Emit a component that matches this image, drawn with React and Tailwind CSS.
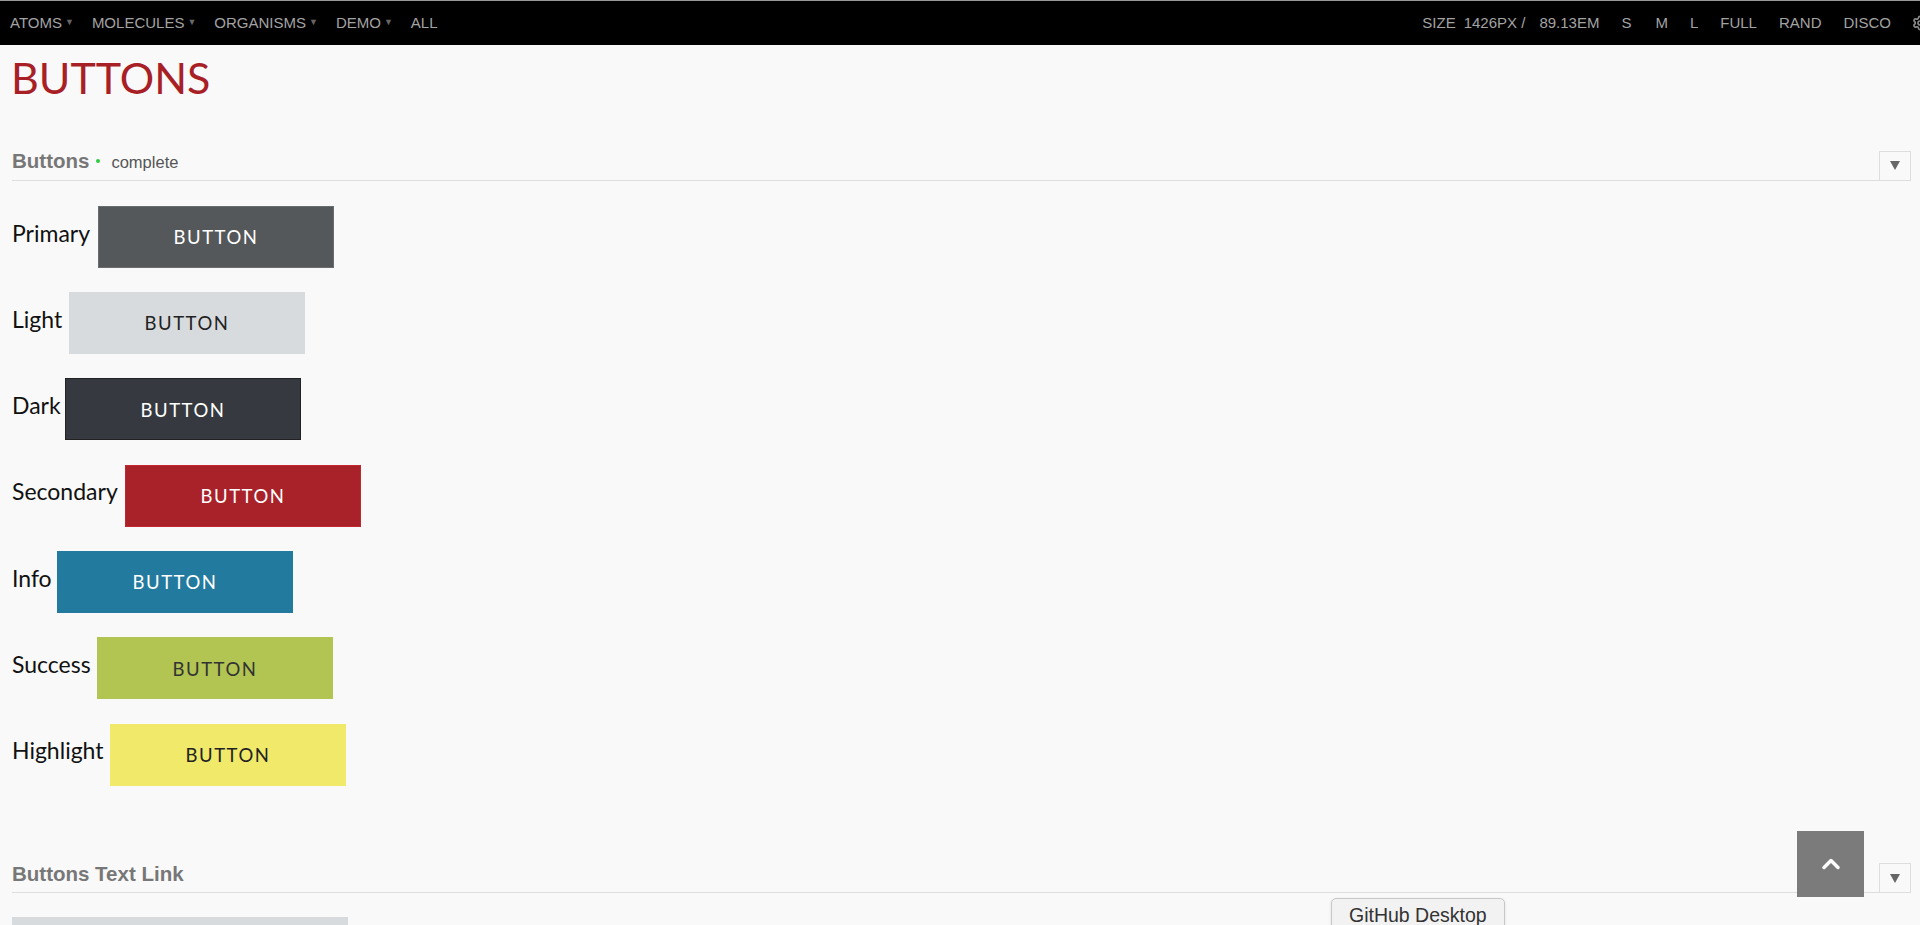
import React from 'react';
import { Settings, ChevronUp } from 'lucide-react';

const navLeft = ['ATOMS', 'MOLECULES', 'ORGANISMS', 'DEMO'];

const variants = [
  { label: 'Primary', labelW: 'w-[86px]', btn: 'bg-[#55585b] border-[#6a6d70] text-white' },
  { label: 'Light', labelW: 'w-[57px]', btn: 'bg-[#d8dbde] border-[#d8dbde] text-[#222]' },
  { label: 'Dark', labelW: 'w-[53px]', btn: 'bg-[#363a40] border-[#222] text-white' },
  { label: 'Secondary', labelW: 'w-[113px]', btn: 'bg-[#a92129] border-[#c0272f] text-white' },
  { label: 'Info', labelW: 'w-[45px]', btn: 'bg-[#227a9f] border-[#227a9f] text-white' },
  { label: 'Success', labelW: 'w-[85px]', btn: 'bg-[#b2c452] border-[#b2c452] text-[#333]' },
  { label: 'Highlight', labelW: 'w-[98px]', btn: 'bg-[#f0e96a] border-[#f0e96a] text-[#222]' },
];

const sans = "font-['Source_Sans_Pro','Lato','Noto_Sans',sans-serif]";
const helv = "font-['Liberation_Sans',Arial,sans-serif]";

const Toggle = () => (
  <div className="w-[32px] h-[30px] border border-[#ddd] bg-[#f9f9f9] flex items-center justify-center shrink-0">
    <span className="w-0 h-0 border-l-[5px] border-r-[5px] border-t-[9px] border-l-transparent border-r-transparent border-t-[#666]" />
  </div>
);

const App = () => {
  return (
    <div className="relative w-[1920px] h-[925px] overflow-hidden bg-[#f9f9f9] border-t border-[#999]">
      {/* top bar */}
      <nav className={`h-[44px] bg-black flex items-center justify-between text-[15px] text-[#a3a3a3] ${helv}`}>
        <div className="flex items-center gap-[18px] pl-[10px]">
          {navLeft.map((item) => (
            <span key={item} className="flex items-center gap-[3px]">
              {item}
              <span className="text-[9px] text-[#666]">▼</span>
            </span>
          ))}
          <span>ALL</span>
        </div>
        <div className="flex items-center">
          <span className="mr-[8px]">SIZE</span>
          <span className="mr-[14px]">1426PX /</span>
          <span className="mr-[22px]">89.13EM</span>
          <span className="mr-[24px]">S</span>
          <span className="mr-[22px]">M</span>
          <span className="mr-[22px]">L</span>
          <span className="mr-[22px]">FULL</span>
          <span className="mr-[22px]">RAND</span>
          <span className="mr-[21px]">DISCO</span>
          <Settings className="w-[16px] h-[16px] text-[#888] -mr-[8px]" strokeWidth={2.5} />
        </div>
      </nav>

      <main className="pl-[12px] pr-[9px]">
        <h1 className={`text-[43px] leading-none text-[#a81f26] pt-[11px] -ml-[1px] ${sans}`}>BUTTONS</h1>

        {/* Buttons section */}
        <div className="mt-[47px] flex items-end justify-between border-b border-[#ddd]">
          <div className={`flex items-baseline pb-[3px] ${helv}`}>
            <span className="text-[20.5px] font-bold text-[#777]">Buttons</span>
            <span className="ml-[7px] mr-[11px] w-[4px] h-[4px] rounded-full bg-[#2ecc40] self-center" />
            <span className="text-[16.5px] text-[#555]">complete</span>
          </div>
          <div className="-mb-px">
            <Toggle />
          </div>
        </div>

        <div className="flex flex-col gap-[24.33px] pt-[25px]">
          {variants.map((v) => (
            <div key={v.label} className="flex items-center">
              <span className={`${v.labelW} mb-[8px] text-[23px] text-[#111] ${sans}`}>{v.label}</span>
              <button
                className={`w-[236px] h-[62px] border flex items-center justify-center text-[18.5px] tracking-[1.5px] pt-[2px] ${sans} ${v.btn}`}
              >
                BUTTON
              </button>
            </div>
          ))}
        </div>

        {/* Buttons Text Link section */}
        <div className="mt-[73px] flex items-end justify-between border-b border-[#ddd]">
          <span className={`text-[20.5px] font-bold text-[#777] pb-[3px] ${helv}`}>Buttons Text Link</span>
          <div className="-mb-px">
            <Toggle />
          </div>
        </div>
        <div className="mt-[24px] w-[336px] h-[62px] bg-[#d8dbde]" />
      </main>

      {/* scroll to top */}
      <div className="absolute left-[1797px] top-[830px] w-[67px] h-[66px] bg-[#7b7b7b] flex items-center justify-center">
        <ChevronUp className="w-[28px] h-[28px] text-white" strokeWidth={3} />
      </div>

      {/* os tooltip */}
      <div className={`absolute left-[1331px] top-[897px] w-[174px] h-[40px] bg-[#f2f2f2] border border-[#c8c8c8] rounded-[5px] shadow-sm pl-[17px] pt-[2px] text-[19.5px] text-[#333] ${helv}`}>
        GitHub Desktop
      </div>
    </div>
  );
};

export default App;
